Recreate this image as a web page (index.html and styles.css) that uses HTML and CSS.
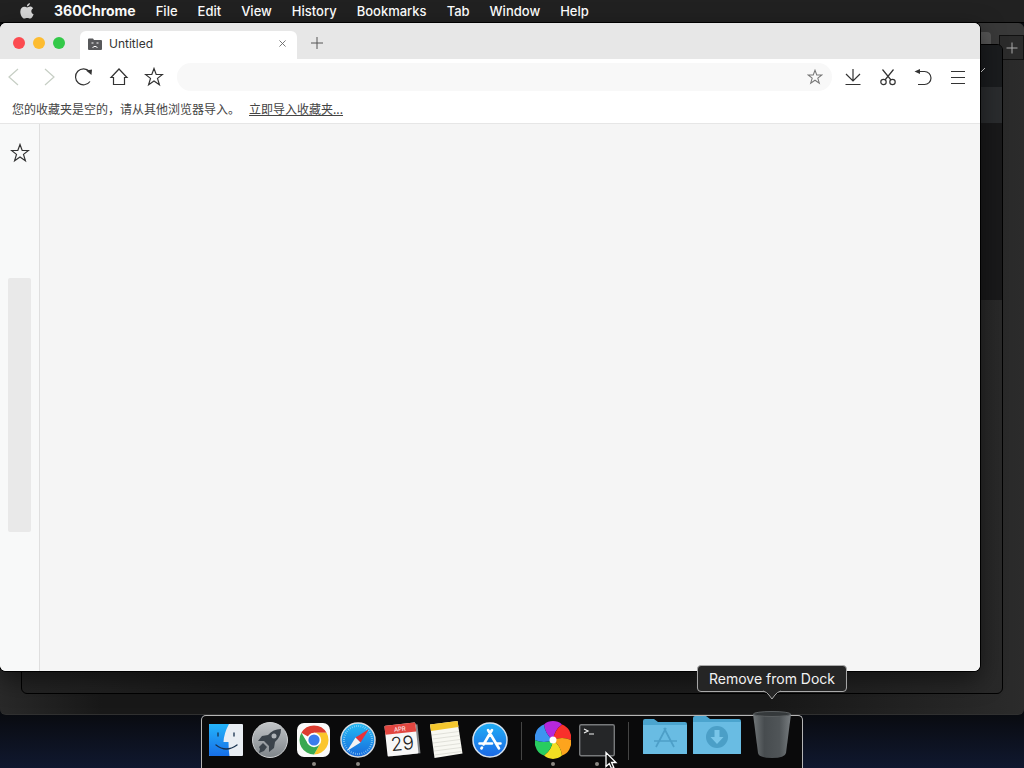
FILE: index.html
```html
<!DOCTYPE html>
<html lang="en">

<head>
    <meta charset="UTF-8">
    <meta name="viewport" content="width=device-width, initial-scale=1.0">
    <title>360Chrome</title>
    <link rel="stylesheet" href="styles.css">
</head>

<body>
    <nav class="menubar">
        <svg class="apple" viewBox="0 0 14 16">
            <path d="M9.900 0c.1 1.800-1.300 3.400-3 3.400C6.700 1.800 8.200.3 9.900 0zM7.100 4.400c.7 0 1.700-.8 3-.8 1.200 0 2.300.6 3 1.600-2.600 1.600-2.200 5 .5 6.100-.7 2-2 4.300-3.500 4.300-1.100 0-1.500-.7-2.900-.7s-1.900.7-2.900.7C2.500 15.600.3 12 .3 8.700c0-3.200 2-5 4-5 1.200 0 2.200.7 2.800.7z"/>
        </svg>
        <button class="app-name">360Chrome</button>
        <button>File</button>
        <button>Edit</button>
        <button>View</button>
        <button>History</button>
        <button>Bookmarks</button>
        <button>Tab</button>
        <button>Window</button>
        <button>Help</button>
    </nav>

    <main class="desktop">
        <!-- dark windows behind -->
        <div class="window back">
            <div class="back-strip">
                <span class="back-tab"></span>
                <button class="back-new" aria-label="New tab">
                    <svg viewBox="0 0 12 12"><path d="M6 0.500v11M0.500 6h11"/></svg>
                </button>
            </div>
        </div>
        <div class="window middle">
            <div class="middle-head">
                <svg viewBox="0 0 8 8"><path d="M1 6l4-4"/></svg>
            </div>
            <div class="middle-bar"></div>
            <div class="middle-body"></div>
        </div>

        <!-- browser -->
        <section class="window browser">
            <header class="tabs">
                <div class="lights">
                    <button class="red" aria-label="Close"></button>
                    <button class="yellow" aria-label="Minimize"></button>
                    <button class="green" aria-label="Zoom"></button>
                </div>
                <div class="tab">
                    <svg class="favicon" viewBox="0 0 14 12">
                        <path fill="#58595b" d="M0 1.500Q0 .5 1 .5h4l1 1.500h7q1 0 1 1V11q0 1-1 1H1q-1 0-1-1z"/>
                        <path fill="none" stroke="#fff" d="M3.500 5h2M8.500 5h2M4.500 9.500Q7 7 9.500 9.500"/>
                    </svg>
                    <span class="tab-title">Untitled</span>
                    <button class="tab-close" aria-label="Close tab">
                        <svg viewBox="0 0 8 8"><path d="M.5.5l7 7M7.500.5l-7 7"/></svg>
                    </button>
                </div>
                <button class="new-tab" aria-label="New tab">
                    <svg viewBox="0 0 12 12"><path d="M6 0v12M0 6h12"/></svg>
                </button>
            </header>

            <div class="toolbar">
                <button class="tool off" aria-label="Back">
                    <svg viewBox="0 0 20 20"><path d="M14 2L5 10l9 8"/></svg>
                </button>
                <button class="tool off" aria-label="Forward">
                    <svg viewBox="0 0 20 20"><path d="M6 2l9 8-9 8"/></svg>
                </button>
                <button class="tool" aria-label="Reload">
                    <svg viewBox="0 0 20 20"><path d="M16 14.500A8 8 0 1 1 15.500 4.500"/><path class="solid" d="M12 3.500l6-1-.5 5.500z"/></svg>
                </button>
                <button class="tool" aria-label="Home">
                    <svg viewBox="0 0 20 20"><path d="M4.500 17.500v-7H2L10 2l8 8.500h-2.500v7z"/></svg>
                </button>
                <button class="tool" aria-label="Favorites">
                    <svg viewBox="0 0 20 20"><path d="M10 1.500l2.200 6h6.300l-5 3.900 1.900 6.300L10 14l-5.400 3.700 1.900-6.300-5-3.900h6.300z"/></svg>
                </button>
                <div class="address">
                    <input type="text" aria-label="Address">
                    <button class="add-star" aria-label="Add to favorites">
                        <svg viewBox="0 0 20 20"><path d="M10 1.500l2.200 6h6.300l-5 3.900 1.900 6.300L10 14l-5.400 3.700 1.900-6.300-5-3.900h6.300z"/></svg>
                    </button>
                </div>
                <button class="tool" aria-label="Downloads">
                    <svg viewBox="0 0 20 20"><path d="M10 2v12M3 7l7 7 7-7M2.500 17.500h15"/></svg>
                </button>
                <button class="tool" aria-label="Screenshot">
                    <svg viewBox="0 0 20 20"><path d="M4.500 2.500L13 13M15.500 2.500L7 13"/><circle cx="5.500" cy="15" r="2.700"/><circle cx="14.500" cy="15" r="2.700"/></svg>
                </button>
                <button class="tool" aria-label="Undo">
                    <svg viewBox="0 0 20 20"><path d="M4 4.500h7.500a6.500 6.500 0 0 1 0 13H5"/><path class="solid" d="M1.500 4.500L7 2v5z"/></svg>
                </button>
                <button class="tool" aria-label="Menu">
                    <svg viewBox="0 0 20 20"><path d="M3 4.500h14M3 10.500h14M3 16.500h14"/></svg>
                </button>
            </div>

            <div class="bookmarks" lang="zh">
                <span>您的收藏夹是空的，请从其他浏览器导入。</span>
                <a href="#">立即导入收藏夹...</a>
            </div>

            <div class="content">
                <aside class="sidebar">
                    <button class="tool" aria-label="Favorites panel">
                        <svg viewBox="0 0 20 20"><path d="M10 1.500l2.200 6h6.300l-5 3.900 1.900 6.300L10 14l-5.400 3.700 1.900-6.300-5-3.900h6.300z"/></svg>
                    </button>
                    <div class="side-block"></div>
                </aside>
                <div class="page"></div>
            </div>
        </section>
    </main>

    <footer class="dock">
        <button class="app" aria-label="Finder">
            <svg viewBox="0 0 36 36">
                <defs>
                    <linearGradient id="finder" x2="0" y2="1"><stop stop-color="#24b4fa"/><stop offset="1" stop-color="#176fe8"/></linearGradient>
                </defs>
                <rect x="1" y="2" width="34" height="32" rx="1" fill="#e9eef4"/>
                <path fill="url(#finder)" d="M2 2h19q-5 9-5.500 18h5q0 8 1 14H2q-1 0-1-1V3q0-1 1-1z"/>
                <path fill="none" stroke="#17314f" stroke-width="1.300" stroke-linecap="round" d="M10 11v3M26 11v3M8 23q10 8 21 0"/>
            </svg>
        </button>
        <button class="app" aria-label="Launchpad">
            <svg viewBox="0 0 36 36">
                <defs>
                    <linearGradient id="pad" x2="0" y2="1"><stop stop-color="#c2c5c8"/><stop offset="1" stop-color="#7f858a"/></linearGradient>
                </defs>
                <circle cx="18" cy="18" r="17.500" fill="url(#pad)" stroke="#d0d2d4"/>
                <path fill="#3b434b" d="M29 7q-8 0-13 6l-6 1-4 5 6 0 5 5 0 6 5-4 1-6q6-5 6-13z"/>
                <path fill="#3b434b" d="M11 21l-4 4 1 2-1 4 5-2 3-4z"/>
                <circle cx="22" cy="14" r="2.500" fill="#aeb3b7"/>
            </svg>
        </button>
        <button class="app running" aria-label="Chrome">
            <svg viewBox="0 0 36 36">
                <rect x="1" y="1" width="33" height="34" rx="7" fill="#fafafa"/>
                <path fill="#dc3c30" d="M18 18L5.400 10.800A14.500 14.500 0 0 1 30.600 10.800H18z"/>
                <path fill="#fbc62c" d="M18 18V10.800h12.600A14.500 14.500 0 0 1 18 32.500l6.200-10.900z"/>
                <path fill="#39a852" d="M18 18l6.200 3.600L18 32.500A14.500 14.500 0 0 1 5.400 10.800L11.800 21.600z"/>
                <circle cx="18" cy="18" r="7.200" fill="#fff"/>
                <circle cx="18" cy="18" r="5.600" fill="#3b7ded"/>
            </svg>
        </button>
        <button class="app running" aria-label="Safari">
            <svg viewBox="0 0 36 36">
                <defs>
                    <linearGradient id="safari" x2="0" y2="1"><stop stop-color="#24bbf4"/><stop offset="1" stop-color="#1769dc"/></linearGradient>
                </defs>
                <circle cx="18" cy="18" r="17" fill="url(#safari)" stroke="#d9dde1" stroke-width="1.500"/>
                <circle cx="18" cy="18" r="14" fill="none" stroke="#a5dcfb" stroke-width="2" stroke-dasharray=".6 1.600"/>
                <path fill="#e8323a" d="M29 7L15.500 15.500l5 5z"/>
                <path fill="#f3f3f3" d="M7 29l13.500-8.500-5-5z"/>
            </svg>
        </button>
        <button class="app" aria-label="Calendar">
            <svg viewBox="0 0 36 36">
                <g transform="rotate(-6 18 18)">
                    <path fill="#85888b" d="M3 4h32v29H6z"/>
                    <rect x="2" y="2" width="31" height="31" rx="1" fill="#f7f7f7"/>
                    <path fill="#e24640" d="M3 2h29q1 0 1 1v8H2V3q0-1 1-1z"/>
                    <text class="cal-month" x="17" y="9" text-anchor="middle">APR</text>
                    <text class="cal-day" x="18" y="28" text-anchor="middle">29</text>
                </g>
            </svg>
        </button>
        <button class="app" aria-label="Notes">
            <svg viewBox="0 0 36 36">
                <path fill="#f8f8f2" d="M2 2.500L29.500-1 34.500 31.500 6.500 36z"/>
                <path fill="#f3c62e" d="M2 2.500L29.500-1l1 6L3 9z"/>
                <path fill="none" stroke="#d5d5cf" stroke-width=".7" d="M4 13l27-3.500M4.500 17l27-3.500M5 21l27-3.500M5.500 25l27-3.500M6 29l27-3.500M6.500 33l27-3.500"/>
            </svg>
        </button>
        <button class="app" aria-label="App Store">
            <svg viewBox="0 0 36 36">
                <defs>
                    <linearGradient id="store" x2="0" y2="1"><stop stop-color="#21aff6"/><stop offset="1" stop-color="#1b68e5"/></linearGradient>
                </defs>
                <circle cx="18" cy="18" r="17" fill="url(#store)" stroke="#d5e2ef" stroke-width="1.500"/>
                <path fill="none" stroke="#fff" stroke-width="2.600" stroke-linecap="round" d="M20 8l-8.500 14.500M10 25.500l-.6 1M16 8l11 18.500M7.500 21.500h12.500M25 21.500h3.500"/>
            </svg>
        </button>
        <span class="divider"></span>
        <button class="app running" aria-label="360Chrome">
            <svg viewBox="0 0 36 36">
                <defs><path id="blade" d="M18 18Q10 12 9 2.400A14 14 0 0 1 27 2.400Q19.200 8.100 18 18z"/></defs>
                <use href="#blade" fill="#b528dc"/>
                <use href="#blade" fill="#f9302b" transform="rotate(60 18 18)"/>
                <use href="#blade" fill="#fda41d" transform="rotate(120 18 18)"/>
                <use href="#blade" fill="#f2df22" transform="rotate(180 18 18)"/>
                <use href="#blade" fill="#28cd60" transform="rotate(240 18 18)"/>
                <use href="#blade" fill="#3d94f0" transform="rotate(300 18 18)"/>
                <circle cx="18" cy="18" r="3.500" fill="#fff"/>
            </svg>
        </button>
        <button class="app running" aria-label="Terminal">
            <svg viewBox="0 0 36 36">
                <rect x=".7" y="2.700" width="34.600" height="31" rx="1.500" fill="#252628" stroke="#77797b" stroke-width="1.400"/>
                <path fill="none" stroke="#f2f2f2" stroke-width="1.200" d="M5 7l4 2-4 2M10 12h5"/>
            </svg>
            <svg class="cursor" viewBox="0 0 12 19">
                <path fill="#111" stroke="#fff" stroke-width="1.300" d="M1 1.500v14l3.300-3 2.200 5 2.300-1-2.200-5H11z"/>
            </svg>
        </button>
        <span class="divider"></span>
        <button class="folder" aria-label="Applications">
            <svg viewBox="0 0 46 36">
                <path fill="#4ba4ce" d="M1 2q0-2 2-2h9l4 3h27q2 0 2 2v30H1z"/>
                <path fill="#69bce3" d="M1 6h44v28q0 1-1 1H2q-1 0-1-1z"/>
                <path fill="none" stroke="#4d9fc8" stroke-width="1.700" d="M24 9l-10 19M22 9l10 19M12 22h23"/>
            </svg>
        </button>
        <button class="folder large" aria-label="Downloads folder">
            <svg viewBox="0 0 48 40">
                <path fill="#4ba4ce" d="M0 2q0-2 2-2h11l4 3h29q2 0 2 2v33H0z"/>
                <path fill="#69bce3" d="M0 6h48v31q0 1-1 1H1q-1 0-1-1z"/>
                <circle cx="24" cy="21" r="11" fill="#4b9fc7"/>
                <path fill="#79c6e9" d="M21.500 14h5v7h4L24 28l-6.500-7h4z"/>
            </svg>
        </button>
        <button class="trash" aria-describedby="trash-tip" aria-label="Trash">
            <svg viewBox="0 0 40 48">
                <defs>
                    <linearGradient id="bin"><stop stop-color="#727779"/><stop offset=".3" stop-color="#474c4f"/><stop offset=".7" stop-color="#505558"/><stop offset="1" stop-color="#777c7f"/></linearGradient>
                </defs>
                <path fill="url(#bin)" d="M1 3l5 39q1 5 14 5t14-5l5-39z"/>
                <ellipse cx="20" cy="3" rx="18.500" ry="2.500" fill="#35393b" stroke="#5b5f61"/>
            </svg>
            <span class="tip" id="trash-tip" role="tooltip">Remove from Dock
                <svg viewBox="0 0 18 9"><path d="M0 0q4 1 6 4l3 4 3-4q2-3 6-4"/></svg>
            </span>
        </button>
    </footer>
</body>

</html>
```
FILE: styles.css
```css
* {
    margin: 0;
    padding: 0;
    box-sizing: border-box;
}

body {
    display: flex;
    flex-direction: column;
    height: 100vh;
    overflow: hidden;
    font-family: Inter, "Liberation Sans", "Noto Sans CJK SC", sans-serif;
    background: linear-gradient(#090b10 0, #090b10 calc(100% - 54px), #10182f 100%);
}

button {
    border: none;
    background: none;
    font: inherit;
    color: inherit;
}

svg {
    display: block;
}

.menubar {
    display: flex;
    align-items: center;
    flex: none;
    gap: 20px;
    height: 23px;
    padding-left: 20px;
    border-bottom: 1px solid #000;
    background: #212121;
    color: #fff;
    font-size: 13px;
    font-weight: 500;
    line-height: 22px;
}

.apple {
    width: 14px;
    height: 16px;
    fill: #d8d8d8;
}

.app-name {
    font-size: 14px;
    font-weight: 700;
}

.desktop {
    position: relative;
    flex: 1;
}

.window {
    position: absolute;
    overflow: hidden;
    border-radius: 6px;
}

.back {
    inset: 0 0 53px 0;
    background: linear-gradient(90deg, #292929, #181818 10%, #181818 75%, #2b2b2b);
    border-bottom: 1px solid #303030;
}

.back-strip {
    display: flex;
    justify-content: flex-end;
    align-items: flex-end;
    gap: 8px;
    height: 37px;
    background: #393939;
}

.back-tab {
    width: 60px;
    height: 28px;
    border-radius: 4px 4px 0 0;
    background: #555;
}

.back-new {
    display: flex;
    align-items: center;
    justify-content: center;
    width: 25px;
    height: 25px;
    border: 1px solid #111;
    background: #2b2b2b;
}

.back-new svg {
    width: 12px;
    height: 12px;
    stroke: #aaa;
}

.middle {
    inset: 21px 21px 74px 21px;
    border: 1px solid #000;
    background: linear-gradient(90deg, #242424, #1b1b1b 20%, #1d1d1d 75%, #292929);
}

.middle-head {
    display: flex;
    align-items: center;
    justify-content: flex-end;
    height: 42px;
    padding: 8px 14px 0 0;
    background: #1a1c1e;
}

.middle-head svg {
    width: 8px;
    height: 16px;
    stroke: #ddd;
}

.middle-bar {
    height: 36px;
    background: #2a2c2e;
}

.middle-body {
    height: 177px;
    background: #19191a;
}

.browser {
    display: flex;
    flex-direction: column;
    inset: 0 44px 97px 0;
    background: #fff;
    box-shadow: 0 0 0 1px #000, 0 8px 24px rgba(0, 0, 0, 0.5);
}

.tabs {
    display: flex;
    align-items: center;
    flex: none;
    height: 36px;
    padding-left: 13px;
    background: #e7e7e7;
}

.lights {
    display: flex;
    gap: 8px;
    padding-top: 4px;
    margin-right: 15px;
}

.lights button {
    width: 12px;
    height: 12px;
    border-radius: 50%;
}

.red {
    background: #fc4b50;
}

.yellow {
    background: #fdbc30;
}

.green {
    background: #33c948;
}

.tab {
    display: flex;
    align-items: center;
    align-self: flex-end;
    width: 217px;
    height: 28px;
    padding: 0 11px 3px 8px;
    border-radius: 6px 6px 0 0;
    background: #fff;
}

.favicon {
    width: 14px;
    height: 12px;
}

.tab-title {
    flex: 1;
    margin-left: 7px;
    font-size: 12px;
    color: #333;
}

.tab-close svg {
    width: 7px;
    height: 7px;
    stroke: #666;
}

.new-tab {
    padding: 4px 0 0 14px;
}

.new-tab svg {
    width: 12px;
    height: 12px;
    stroke: #555;
}

.toolbar {
    display: flex;
    align-items: center;
    flex: none;
    gap: 15px;
    height: 35px;
    padding: 0 12px 0 4px;
}

.tool svg {
    width: 20px;
    height: 20px;
    fill: none;
    stroke: #333;
    stroke-width: 1.2;
}

.tool .solid {
    fill: #333;
    stroke: none;
}

.tool.off svg {
    stroke: #c6cec4;
}

.address {
    display: flex;
    align-items: center;
    flex: 1;
    height: 28px;
    margin: 0 -4px 0 -2px;
    padding: 0 9px 0 14px;
    border-radius: 14px;
    background: #f8f8f8;
}

.address input {
    flex: 1;
    border: none;
    outline: none;
    background: none;
    font-size: 13px;
}

.add-star svg {
    width: 16px;
    height: 16px;
    fill: none;
    stroke: #777;
    stroke-width: 1.3;
}

.bookmarks {
    display: flex;
    align-items: center;
    flex: none;
    gap: 9px;
    height: 30px;
    padding-left: 12px;
    border-bottom: 1px solid #e6e6e6;
    font-family: "Noto Sans CJK SC", sans-serif;
    font-size: 12px;
    color: #444;
}

.bookmarks a {
    color: #444;
}

.content {
    display: flex;
    flex: 1;
}

.sidebar {
    display: flex;
    flex-direction: column;
    align-items: center;
    width: 40px;
    padding-top: 19px;
    border-right: 1px solid #dfdfdf;
    background: #f8f9f9;
}

.side-block {
    width: 23px;
    height: 254px;
    margin-top: 115px;
    border-radius: 2px;
    background: #e9e9e9;
}

.page {
    flex: 1;
    background: #f5f5f5;
}

.dock {
    position: absolute;
    bottom: 0;
    left: calc(50% - 10px);
    display: flex;
    gap: 8px;
    height: 53px;
    padding: 6px 10px 0 6px;
    transform: translateX(-50%);
    border: 1px solid #b5b5b5;
    border-bottom: none;
    border-radius: 5px 5px 0 0;
    background: #0a0a0b;
}

.app {
    position: relative;
    width: 36px;
    height: 36px;
}

.app svg {
    width: 36px;
    height: 36px;
    overflow: visible;
}

.running::after {
    content: "";
    position: absolute;
    bottom: -8px;
    left: 16px;
    width: 4px;
    height: 4px;
    border-radius: 50%;
    background: #8c8883;
}

.app .cursor {
    position: absolute;
    top: 29px;
    left: 26px;
    width: 12px;
    height: 19px;
}

.cal-month {
    font-size: 6px;
    fill: #fff;
}

.cal-day {
    font-size: 19px;
    font-weight: 300;
    fill: #222;
}

.divider {
    width: 1px;
    height: 38px;
    margin: 0 5px;
    background: #444;
}

.folder {
    width: 46px;
    height: 36px;
    margin-top: -3px;
}

.folder svg {
    width: 46px;
    height: 36px;
}

.folder.large,
.folder.large svg {
    width: 48px;
    height: 40px;
}

.folder.large {
    margin: -6px 0 0 -3px;
}

.trash {
    position: relative;
    width: 40px;
    height: 48px;
    margin: -11px 0 0 3px;
}

.trash > svg {
    width: 40px;
    height: 48px;
}

.tip {
    position: absolute;
    bottom: 67px;
    left: 50%;
    padding: 0 11px;
    transform: translateX(-50%);
    border: 1px solid #aaa;
    border-radius: 4px;
    background: #252525;
    color: #f2f2f2;
    font-size: 14px;
    line-height: 25px;
    white-space: nowrap;
}

.tip svg {
    position: absolute;
    top: 100%;
    left: 50%;
    width: 18px;
    height: 9px;
    margin-left: -9px;
    overflow: visible;
    fill: #252525;
    stroke: #aaa;
}
```
